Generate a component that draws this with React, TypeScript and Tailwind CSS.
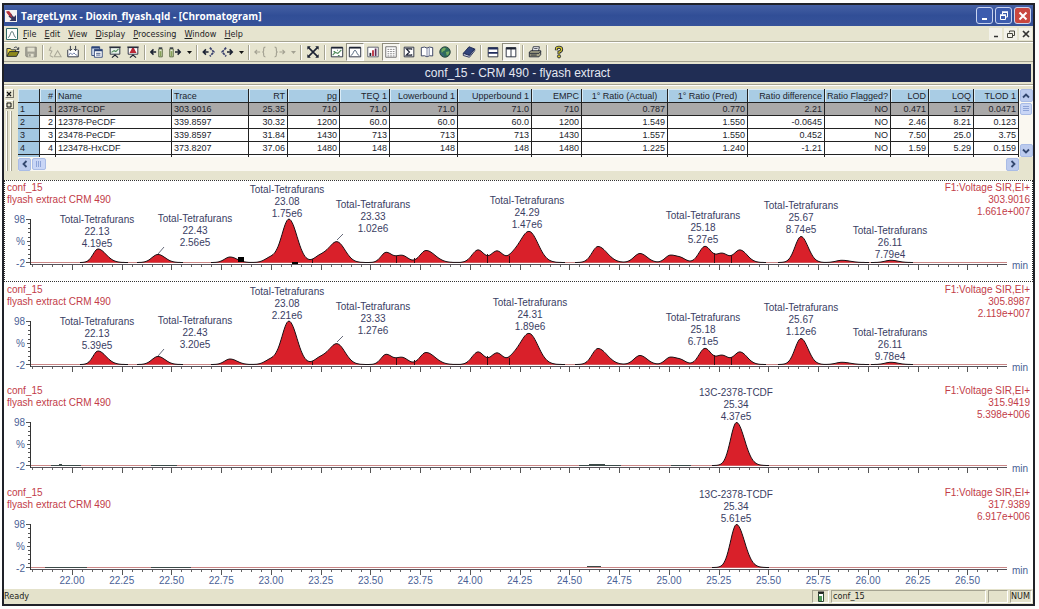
import React from "react";

type Peak = [x: number, h: number, left: number, right: number];
type Label = { x: number; top: number; lines: [string, string, string] };
type Trace = {
  mass: string;
  intensity: string;
  peaks: Peak[];
  dividers: [number, number][];
  leaders: [number, number, number, number][];
  marks: [number, number, number, number][];
  labels: Label[];
};

const PLOT_W = 976;
const BASE = 48;
const START = 21.794;
const PX_PER_MIN = 199;

const timeToX = (t: number) => (t - START) * PX_PER_MIN;

const furanPeaks: Peak[] = [
  [67, 13.5, 5, 8],
  [127, 8, 6, 7],
  [199, 5.5, 5.5, 7],
  [240, 5, 6, 8],
  [258, 43, 7, 8],
  [289, 6, 6, 7],
  [306, 20.5, 8, 8],
  [355, 10, 5, 6],
  [371, 7, 6, 6],
  [395, 12, 6, 9],
  [447, 12.5, 6, 6],
  [466, 11.5, 6, 6],
  [482, 5, 5, 6],
  [498, 31, 9, 9],
  [567, 16, 6, 9],
  [609, 9, 6, 7],
  [639, 7, 5, 6],
  [650, 4, 5, 5],
  [674, 16, 6, 6],
  [691, 9, 6, 6],
  [709, 12.5, 6, 7],
  [770, 26, 6, 7],
  [811, 2.2, 6, 8],
  [860, 2.2, 6, 7],
];

const furanDividers: [number, number][] = [
  [281, 4],
  [365, 7],
  [383, 5],
  [456, 9],
  [478, 7],
  [683, 10],
  [700, 8],
];

const leaders: [number, number, number, number][] = [
  [127, 40, 133, 33],
  [306, 26, 312, 20],
];

const furans = (areas: string[], apex: [number, string]): Label[] =>
  (
    [
      [66, 34, "22.13"],
      [164, 33, "22.43"],
      [256, 4, "23.08"],
      [342, 19, "23.33"],
      [apex[0], 15, apex[1]],
      [672, 30, "25.18"],
      [770, 20, "25.67"],
      [859, 45, "26.11"],
    ] as [number, number, string][]
  ).map(([x, top, rt], i) => ({ x, top, lines: ["Total-Tetrafurans", rt, areas[i]] }));

const traces: Trace[] = [
  {
    mass: "303.9016",
    intensity: "1.661e+007",
    peaks: furanPeaks,
    dividers: furanDividers,
    leaders,
    marks: [
      [207, 43, 6, 5],
      [261, 48, 6, 2],
    ],
    labels: furans(["4.19e5", "2.56e5", "1.75e6", "1.02e6", "1.47e6", "5.27e5", "8.74e5", "7.79e4"], [496, "24.29"]),
  },
  {
    mass: "305.8987",
    intensity: "2.119e+007",
    peaks: furanPeaks,
    dividers: furanDividers,
    leaders,
    marks: [],
    labels: furans(["5.39e5", "3.20e5", "2.21e6", "1.27e6", "1.89e6", "6.71e5", "1.12e6", "9.78e4"], [499, "24.31"]),
  },
  {
    mass: "315.9419",
    intensity: "5.398e+006",
    peaks: [[705.5, 43, 6, 8]],
    dividers: [],
    leaders: [],
    marks: [
      [20, 48, 30, 1],
      [28, 47, 3, 1],
      [120, 48, 26, 1],
      [548, 48, 42, 1],
      [558, 47, 16, 1],
      [640, 48, 20, 1],
    ],
    labels: [{ x: 705, top: 4, lines: ["13C-2378-TCDF", "25.34", "4.37e5"] }],
  },
  {
    mass: "317.9389",
    intensity: "6.917e+006",
    peaks: [[705.5, 43, 6, 8]],
    dividers: [],
    leaders: [],
    marks: [
      [14, 48, 42, 1],
      [120, 48, 40, 1],
      [556, 47, 14, 1],
    ],
    labels: [{ x: 705, top: 4, lines: ["13C-2378-TCDF", "25.34", "5.61e5"] }],
  },
];

const tickTimes = Array.from({ length: 19 }, (_, i) => 22 + i * 0.25);
const minorTicks = Array.from({ length: 99 }, (_, i) => 21.8 + i * 0.05).filter((t) => t < 26.7);

function heightAt(peaks: Peak[], x: number) {
  return peaks.reduce((sum, [px, h, l, r]) => {
    const w = x < px ? l : r;
    return sum + h * Math.exp(-((x - px) ** 2) / (2 * w * w));
  }, 0);
}

function curvePaths(peaks: Peak[]) {
  let fill = `M0 ${BASE + 0.5}`;
  let line = "";
  let open = false;
  for (let x = 0; x <= PLOT_W; x += 1) {
    const h = Math.min(heightAt(peaks, x), 43.5);
    const y = (BASE + 0.5 - h).toFixed(1);
    fill += `L${x} ${y}`;
    if (h > 0.01) {
      line += `${open ? "L" : "M"}${x} ${y}`;
      open = true;
    } else {
      open = false;
    }
  }
  return { fill: `${fill}L${PLOT_W} ${BASE + 0.5}Z`, line };
}

const pct = (x: number) => `${(x / PLOT_W) * 100}%`;

function ChromatogramPane({ trace, selected, last }: { trace: Trace; selected: boolean; last: boolean }) {
  const { fill, line } = curvePaths(trace.peaks);
  return (
    <section
      className={`relative min-h-[100px] flex-1 text-[10px] leading-[12px] ${
        selected ? "outline-1 outline-dotted -outline-offset-1 outline-[#333]" : ""
      }`}
    >
      <div className="flex h-[34px] justify-between px-[3px] pt-[2px] text-[#c23c48]">
        <p>
          conf_15
          <br />
          flyash extract CRM 490
        </p>
        <p className="text-right">
          F1:Voltage SIR,EI+
          <br />
          {trace.mass}
          <br />
          {trace.intensity}
        </p>
      </div>
      <div className="flex">
        <div className="flex h-[56px] w-[21px] flex-col justify-between text-right text-[#4a5f96]">
          <span>98</span>
          <span>%</span>
          <span>-2</span>
        </div>
        <svg className="h-[60px] w-[6px] shrink-0" viewBox="0 0 6 60" shapeRendering="crispEdges">
          <path
            d="M1 5.5H6M2 27.5H6M1 48.5H6M3 9.5H6M3 14.5H6M3 18.5H6M3 23.5H6M3 31.5H6M3 35.5H6M3 40.5H6M3 44.5H6"
            stroke="#555"
          />
          <path d="M5.5 5V51" stroke="#333" />
        </svg>
        <svg
          className="h-[60px] min-w-0 flex-1 overflow-visible"
          viewBox={`0 0 ${PLOT_W} 60`}
          preserveAspectRatio="none"
        >
          <path d="M0 48.5H976" stroke="#c98686" />
          <path d={fill} fill="#d9202a" />
          <path d={line} fill="none" stroke="#1a1014" />
          {trace.dividers.map(([x, h]) => (
            <path key={x} d={`M${x + 0.5} 49V${49 - h}`} stroke="#3a0a10" />
          ))}
          {trace.marks.map(([x, y, w, h]) => (
            <rect key={`${x}-${y}`} x={x} y={y} width={w} height={h} fill={trace.labels.length > 1 ? "#000" : "#3c4a48"} />
          ))}
          {trace.leaders.map(([x1, y1, x2, y2]) => (
            <path key={x1} d={`M${x1} ${y1}L${x2} ${y2}`} stroke="#666a7a" />
          ))}
          <path d="M0 50.5H976" stroke="#57525a" />
          {minorTicks.map((t) => (
            <path key={t} d={`M${Math.round(timeToX(t)) + 0.5} 51V53`} stroke="#666" />
          ))}
          {tickTimes.map((t) => (
            <path key={t} d={`M${Math.round(timeToX(t)) + 0.5} 51V56`} stroke="#555" />
          ))}
        </svg>
        <span className="w-[26px] pt-[46px] pl-[5px] text-[#4a5f96]">min</span>
      </div>
      <div className="pointer-events-none absolute inset-y-0 right-[26px] left-[27px] text-[#3a3d63]">
        {trace.labels.map((l) => (
          <p
            key={l.lines[1]}
            className="absolute -translate-x-1/2 text-center whitespace-nowrap"
            style={{ left: pct(l.x), top: l.top }}
          >
            {l.lines[0]}
            <br />
            {l.lines[1]}
            <br />
            {l.lines[2]}
          </p>
        ))}
        {last &&
          tickTimes.map((t) => (
            <span
              key={t}
              className="absolute top-[90px] -translate-x-1/2 text-[#4a5f96]"
              style={{ left: pct(timeToX(t)) }}
            >
              {t.toFixed(2)}
            </span>
          ))}
      </div>
    </section>
  );
}

const columns: { name: string; width: number; align: string }[] = [
  { name: "", width: 22, align: "text-left" },
  { name: "#", width: 16, align: "text-right" },
  { name: "Name", width: 116, align: "text-left" },
  { name: "Trace", width: 77, align: "text-left" },
  { name: "RT", width: 39, align: "text-right" },
  { name: "pg", width: 52, align: "text-right" },
  { name: "TEQ 1", width: 50, align: "text-right" },
  { name: "Lowerbound 1", width: 68, align: "text-right" },
  { name: "Upperbound 1", width: 74, align: "text-right" },
  { name: "EMPC", width: 50, align: "text-right" },
  { name: "1° Ratio (Actual)", width: 86, align: "text-center" },
  { name: "1° Ratio (Pred)", width: 80, align: "text-center" },
  { name: "Ratio difference", width: 77, align: "text-right" },
  { name: "Ratio Flagged?", width: 66, align: "text-right" },
  { name: "LOD", width: 38, align: "text-right" },
  { name: "LOQ", width: 45, align: "text-right" },
  { name: "TLOD 1", width: 45, align: "text-right" },
];

const rows = [
  ["1", "1", "2378-TCDF", "303.9016", "25.35", "710", "71.0", "71.0", "71.0", "710", "0.787", "0.770", "2.21", "NO", "0.471", "1.57", "0.0471"],
  ["2", "2", "12378-PeCDF", "339.8597", "30.32", "1200", "60.0", "60.0", "60.0", "1200", "1.549", "1.550", "-0.0645", "NO", "2.46", "8.21", "0.123"],
  ["3", "3", "23478-PeCDF", "339.8597", "31.84", "1430", "713", "713", "713", "1430", "1.557", "1.550", "0.452", "NO", "7.50", "25.0", "3.75"],
  ["4", "4", "123478-HxCDF", "373.8207", "37.06", "1480", "148", "148", "148", "1480", "1.225", "1.240", "-1.21", "NO", "1.59", "5.29", "0.159"],
];

function ResultsTable() {
  return (
    <table className="w-full table-fixed border-separate border-spacing-0 text-[9px] leading-[12px] text-[#22242c]">
      <colgroup>
        {columns.map((c, i) => (
          <col key={i} style={{ width: c.width }} />
        ))}
      </colgroup>
      <thead>
        <tr>
          {columns.map((c, i) => (
            <th
              key={i}
              scope="col"
              className={`h-[14px] overflow-hidden border-r border-b border-[#222] bg-[#a9cce4] px-[2px] py-0 font-normal whitespace-nowrap shadow-[inset_1px_1px_0_#d9ebf6] ${c.align}`}
            >
              {c.name}
            </th>
          ))}
        </tr>
      </thead>
      <tbody>
        {rows.map((r, ri) => (
          <tr key={ri} className={ri === 0 ? "bg-[#aaa9a9]" : "bg-white"}>
            {r.map((v, ci) => (
              <td
                key={ci}
                className={`h-[13px] border-r border-b border-[#222] px-[2px] py-0 whitespace-nowrap ${
                  ci === 0 ? "bg-[#a3c8e2] text-left" : ci === 2 || ci === 3 ? "text-left" : "text-right"
                }`}
              >
                {v}
              </td>
            ))}
          </tr>
        ))}
        <tr className="bg-white">
          {columns.map((_, ci) => (
            <td key={ci} className={`h-[2px] border-r border-[#222] p-0 ${ci === 0 ? "bg-[#a3c8e2]" : ""}`} />
          ))}
        </tr>
      </tbody>
    </table>
  );
}

function ScrollButton({ label, d }: { label: string; d: string }) {
  return (
    <button
      aria-label={label}
      className="flex h-[13px] w-[13px] shrink-0 items-center justify-center rounded-[2px] border border-[#a9bce6] bg-[#bccbee]"
    >
      <svg viewBox="0 0 8 8" className="h-[8px] w-[8px]" fill="none" stroke="#33476f" strokeWidth="1.8">
        <path d={d} />
      </svg>
    </button>
  );
}

const ink = "#1c2233";
const green = "#4f8a58";

const icons: Record<string, React.ReactNode> = {
  Open: (
    <>
      <path d="M1 13V4h4l1 1.5h5V8" fill="#e8d44a" stroke={ink} />
      <path d="M1 13l3-5.500h11L12 13z" fill="#8f8a1c" stroke={ink} />
      <path d="M9 3.500c2-2 4-1 4.500 1M14.500 2.500v2.500h-2.500" fill="none" stroke={ink} />
    </>
  ),
  Save: (
    <>
      <path d="M2 2.500h12v11H3l-1-1z" fill="#a4a396" stroke="#85847a" />
      <path d="M4 3h8v4.500H4z" fill="#e4e2d0" />
      <path d="M5 10h6v3.500H5z" fill="#e4e2d0" />
      <path d="M6 10.500h1.500V13H6z" fill="#85847a" />
    </>
  ),
  Smooth: (
    <path d="M3.500 2L1.500 6l3 1-2 4M7 13.500h8l-4-7-4 7M2 12l4 2" fill="none" stroke="#a9a798" strokeWidth="1.2" />
  ),
  Integrate: (
    <>
      <path d="M2 5.500v8h12v-8" fill="#fff" stroke={ink} />
      <path d="M5 1v5M3 4.500L5 6.500l2-2M11 1v5M9 4.500l2 2 2-2" fill="none" stroke={ink} />
      <path d="M3 12l2-3 2 2 2-2 2 2 2 1" fill="none" stroke="#5b6d9b" />
    </>
  ),
  Windows: (
    <>
      <path d="M2 2h9v10H2z" fill="#dce6f5" stroke="#2b4478" />
      <path d="M5 5h9v9H5z" fill="#fff" stroke="#2b4478" />
      <path d="M2 3h9M5 6h9" stroke="#2b4478" strokeWidth="2" />
      <path d="M7 9.500h5M7 11.500h5" stroke="#2b4478" />
    </>
  ),
  Chart: (
    <>
      <path d="M2.500 3h11v7.500h-11z" fill="#e9f2ec" stroke={ink} />
      <path d="M1.500 2.500h13M8 10.500v2M4.500 14.500L8 11.500l3.500 3" fill="none" stroke={ink} strokeWidth="1.3" />
      <path d="M4 8.500l3-2 2 1 3-3" fill="none" stroke={green} strokeWidth="1.2" />
    </>
  ),
  Peaks: (
    <>
      <path d="M2.500 3h11v7.500h-11z" fill="#fff" stroke={ink} />
      <path d="M1.500 2.500h13M8 10.500v2M4.500 14.500L8 11.500l3.500 3" fill="none" stroke={ink} strokeWidth="1.3" />
      <path d="M4 9l3-5.500h2L12 9z" fill="#b92836" />
    </>
  ),
  "Previous sample": (
    <>
      <path d="M1 8h6M4 5L1 8l3 3" fill="none" stroke={ink} strokeWidth="1.7" />
      <path d="M10 4.500h4v9h-4z" fill="#e6ecd0" stroke="#4a5a35" />
      <path d="M11 7h2v6h-2z" fill="#86a058" />
      <path d="M10 3.500h4" stroke={ink} strokeWidth="1.5" />
    </>
  ),
  "Next sample": (
    <>
      <path d="M2 4.500h4v9H2z" fill="#e6ecd0" stroke="#4a5a35" />
      <path d="M3 7h2v6H3z" fill="#86a058" />
      <path d="M2 3.500h4" stroke={ink} strokeWidth="1.5" />
      <path d="M8 8h6M11 5l3 3-3 3" fill="none" stroke={ink} strokeWidth="1.7" />
    </>
  ),
  "Previous compound": (
    <>
      <path d="M1.500 8h6M4.500 5l-3 3 3 3" fill="none" stroke={ink} strokeWidth="1.8" />
      <path d="M9 3l4.500 5L9 13" fill="none" stroke="#39406e" strokeWidth="2" strokeDasharray="3 1" />
    </>
  ),
  "Next compound": (
    <>
      <path d="M7 3L2.500 8 7 13" fill="none" stroke="#39406e" strokeWidth="2" strokeDasharray="3 1" />
      <path d="M8 8h6M11 5l3 3-3 3" fill="none" stroke={ink} strokeWidth="1.8" />
    </>
  ),
  "Previous group": (
    <path
      d="M1 8h6M3.500 5.500L1 8l2.500 2.500M13 2.500q-2 0-2 2v2q0 1.500-1.500 1.500 1.500 0 1.500 1.500v2q0 2 2 2"
      fill="none"
      stroke="#a3a192"
      strokeWidth="1.3"
    />
  ),
  "Next group": (
    <path
      d="M3 2.500q2 0 2 2v2Q5 8 6.500 8 5 8 5 9.500v2q0 2-2 2M8.500 8h6M12 5.500L14.500 8 12 10.500"
      fill="none"
      stroke="#a3a192"
      strokeWidth="1.3"
    />
  ),
  "Reset zoom": (
    <>
      <path d="M3 3l10 10M13 3L3 13" stroke={ink} strokeWidth="1.8" />
      <path d="M1.500 1.500h4l-4 4zM14.500 1.500v4l-4-4zM1.500 14.500v-4l4 4zM14.500 14.500h-4l4-4z" fill={ink} />
    </>
  ),
  Calibration: (
    <>
      <path d="M1.500 3h13v10.500h-13z" fill="#fff" stroke={ink} />
      <path d="M1.500 3h13" stroke={ink} strokeWidth="2" />
      <path d="M3 11.500l3-3 3 1 4-4M4 7.500h2M9 12h2M8 6h1" fill="none" stroke={green} strokeWidth="1.3" />
    </>
  ),
  Chromatogram: (
    <>
      <path d="M1.500 3h13v10.500h-13z" fill="#fff" stroke={ink} />
      <path d="M1.500 3h13" stroke={ink} strokeWidth="2" />
      <path d="M3 12c3 0 3-6 5-6s2 6 5 6" fill="none" stroke="#4c6177" />
    </>
  ),
  Bars: (
    <>
      <path d="M2 2.500h12v11H2z" fill="#fff" stroke="#515766" />
      <path d="M4 9h2v3.500H4z" fill={ink} />
      <path d="M7 6h2v6.500H7z" fill="#b92836" />
      <path d="M10 4h2v8.500h-2z" fill="#5b2a56" />
    </>
  ),
  Grid: (
    <>
      <path d="M2 2h12v12H2z" fill="#fff" stroke="#666" />
      <path
        d="M4 5h2M7 5h2M10 5h2M4 7.500h2M7 7.500h2M10 7.500h2M4 10h2M7 10h2M10 10h2M4 12.500h2M7 12.500h2M10 12.500h2"
        stroke="#777"
      />
    </>
  ),
  Summary: (
    <>
      <path d="M2.500 2.500h11v11h-11z" fill="#fff" stroke={ink} />
      <path d="M11 5.500v-1H5L8.500 8 5 11.500h6v-1" fill="none" stroke={ink} strokeWidth="1.4" />
    </>
  ),
  Report: (
    <>
      <path d="M1.500 3q4-1.500 6.500.5Q10.500 1.500 14.500 3v9.500q-4-1-6.500 1-2.500-2-6.500-1z" fill="#fff" stroke="#2c3558" />
      <path d="M8 3.500v10M10.500 3v9" stroke="#6c7696" />
    </>
  ),
  Web: (
    <>
      <circle cx="8" cy="8" r="6" fill="#2e6c5c" stroke="#274039" />
      <path d="M4 5q3-3 5-1-1 3-3 3l-2 2zM9 8l4-1q0 4-3 5z" fill="#75ab61" />
      <path d="M2.500 9q3 0 4 4" stroke="#42598d" fill="none" />
    </>
  ),
  Library: (
    <>
      <path d="M1.500 9.500L8 2l6.500 2.500L8.500 12z" fill="#32457c" stroke="#18244e" />
      <path d="M1.500 9.500v2.500L8.500 14l6-7.500v-2L8.500 12z" fill="#d8dcec" stroke="#18244e" />
    </>
  ),
  "Tile rows": (
    <>
      <path d="M2.500 3h11v10.500h-11z" fill="#fff" stroke={ink} />
      <path d="M2.500 4h11M2.500 9h11" stroke="#202c5c" strokeWidth="2.2" />
    </>
  ),
  "Tile columns": (
    <>
      <path d="M2.500 3h11v10.500h-11zM8 3v10.500" fill="#fff" stroke={ink} />
      <path d="M2.500 4h11" stroke={ink} strokeWidth="2.2" />
    </>
  ),
  Print: (
    <>
      <path d="M5 7l1-5h7l-1 5" fill="#fff" stroke={ink} />
      <path d="M1.500 8l2-1.500h11V11l-2 2.500h-11z" fill="#a6a487" stroke={ink} />
      <path d="M2 9.500h10.500l2-2M3 11.500h7M7 4.200h4" fill="none" stroke={ink} />
    </>
  ),
  Help: (
    <>
      <path d="M5 6V4.500Q5 2.500 8 2.500t3 2.500Q11 7 8 8v2.500" fill="none" stroke={ink} strokeWidth="3.4" />
      <path d="M5 5.500V4.500Q5 2.500 8 2.500t3 2.500Q11 7 8 8v2" fill="none" stroke="#d7c92e" strokeWidth="1.5" />
      <circle cx="8" cy="13" r="1.8" fill="#d7c92e" stroke={ink} />
    </>
  ),
};

const toolGroups: string[][] = [
  ["Open", "Save"],
  ["Smooth", "Integrate"],
  ["Windows", "Chart", "Peaks"],
  ["Previous sample", "Next sample", "menu:Samples"],
  ["Previous compound", "Next compound", "menu:Compounds"],
  ["Previous group", "Next group", "menu-off:Groups"],
  ["Reset zoom"],
  ["Calibration", "Chromatogram", "Bars", "Grid", "Summary", "Report", "Web"],
  ["Library"],
  ["Tile rows", "Tile columns"],
  ["Print"],
  ["Help"],
];

const pressed = ["Chromatogram", "Grid", "Tile columns"];

function Toolbar() {
  return (
    <div role="toolbar" className="flex h-[20px] items-center border-t border-b border-t-white border-b-[#a5a391]">
      {toolGroups.map((group, gi) => (
        <React.Fragment key={gi}>
          {gi > 0 && (
            <span className="flex w-[6px] justify-center">
              <span className="h-[15px] w-[2px] border-r border-l border-r-white border-l-[#a5a391]" />
            </span>
          )}
          {group.map((name) =>
            name.startsWith("menu") ? (
              <button key={name} aria-label={name.split(":")[1]} className="flex w-[10px] justify-center">
                <svg viewBox="0 0 5 3" className="h-[3px] w-[5px]" fill={name.startsWith("menu-off") ? "#a3a192" : "#111"}>
                  <path d="M0 0h5L2.500 3z" />
                </svg>
              </button>
            ) : (
              <button
                key={name}
                aria-label={name}
                className={`flex h-[18px] w-[18px] items-center justify-center ${
                  pressed.includes(name) ? "border border-t-[#8f8d7e] border-r-white border-b-white border-l-[#8f8d7e] bg-[#f6f5ee]" : ""
                }`}
              >
                <svg viewBox="0 0 16 16" className="h-[14px] w-[14px] shrink-0">
                  {icons[name]}
                </svg>
              </button>
            )
          )}
        </React.Fragment>
      ))}
    </div>
  );
}

function TitleBar() {
  const box = "flex h-[17px] w-[17px] items-center justify-center rounded-[3px] border border-[#c9d4f0]";
  return (
    <header className="flex h-[21px] items-center bg-linear-to-b from-[#4560a4] via-[#314e96] to-[#36529a] pr-[2px] pl-[1px]">
      <svg viewBox="0 0 12 12" className="h-[12px] w-[12px] shrink-0">
        <path d="M0 0h12v12H0z" fill="#f3f1f0" />
        <path d="M1 1.500l3-.5 3 3.500-2.500 2z" fill="#b5333c" />
        <path d="M11 5v6H4.500l2-2-3-2.500L6 4l3 3z" fill="#33335a" />
        <path d="M2 2l5 5" stroke="#b5333c" strokeWidth="1.5" />
      </svg>
      <h1 className="flex-1 pl-[4px] font-['Open_Sans',sans-serif] text-[10px] leading-[16px] font-bold whitespace-nowrap text-white">
        TargetLynx - Dioxin_flyash.qld - [Chromatogram]
      </h1>
      <div className="flex gap-[2px]">
        <button aria-label="Minimize" className={`${box} bg-[#3c5cae]`}>
          <svg viewBox="0 0 12 12" className="h-[12px] w-[12px]">
            <path d="M3 9h5" stroke="#fff" strokeWidth="2" />
          </svg>
        </button>
        <button aria-label="Restore" className={`${box} bg-[#3c5cae]`}>
          <svg viewBox="0 0 12 12" className="h-[12px] w-[12px]" fill="none" stroke="#fff">
            <path d="M2.500 5.500h5v4h-5zM4.500 4.500v-2h5v4.500h-2" />
            <path d="M2 5h6M4 2h6" strokeWidth="1.5" />
          </svg>
        </button>
        <button aria-label="Close" className={`${box} bg-[#c9473f]`}>
          <svg viewBox="0 0 12 12" className="h-[12px] w-[12px]">
            <path d="M2.500 2.500l7 7M9.500 2.500l-7 7" stroke="#fff" strokeWidth="2" />
          </svg>
        </button>
      </div>
    </header>
  );
}

function MenuBar() {
  const items = ["File", "Edit", "View", "Display", "Processing", "Window", "Help"];
  const box = "flex h-[12px] w-[13px] items-center justify-center bg-[#f3f2ea]";
  return (
    <nav className="flex h-[16px] items-center border-b border-[#a5a391] pr-[1px] pl-[2px] font-['DejaVu_Sans_Condensed','DejaVu_Sans',sans-serif] text-[9px] leading-[12px] text-[#23231f]">
      <svg viewBox="0 0 12 12" className="mr-[5px] h-[12px] w-[12px]">
        <path d="M.5.5h11v11H.5z" fill="#fff" stroke="#2f6b68" />
        <path d="M2 9.500c2 0 2.500-6 4-6s2 6 4 6" fill="none" stroke="#4b6a68" />
      </svg>
      <ul className="flex flex-1 gap-[8px]">
        {items.map((m) => (
          <li key={m}>
            <button>
              <span className="underline underline-offset-1">{m[0]}</span>
              {m.slice(1)}
            </button>
          </li>
        ))}
      </ul>
      <div className="flex gap-[2px]">
        <button aria-label="Minimize document" className={box}>
          <svg viewBox="0 0 8 8" className="h-[8px] w-[8px]">
            <path d="M2 6.500h4" stroke="#333" strokeWidth="1.5" />
          </svg>
        </button>
        <button aria-label="Restore document" className={box}>
          <svg viewBox="0 0 8 8" className="h-[8px] w-[8px]" fill="none" stroke="#44443c">
            <path d="M.5 3.500h5v4h-5zM2.500 2.500v-1.500h5v4.500h-2" />
          </svg>
        </button>
        <button aria-label="Close document" className={box}>
          <svg viewBox="0 0 8 8" className="h-[8px] w-[8px]">
            <path d="M1 1l6 6M7 1L1 7" stroke="#333" strokeWidth="1.7" />
          </svg>
        </button>
      </div>
    </nav>
  );
}

function ResultsPanel() {
  const small =
    "flex h-[9px] w-[9px] items-center justify-center border border-t-white border-r-[#77756a] border-b-[#77756a] border-l-white";
  return (
    <div className="flex border-t border-white pt-[3px] pb-[9px]">
      <div className="flex w-[14px] shrink-0 flex-col items-center gap-[2px] pr-[4px]">
        <button aria-label="Close results" className={small}>
          <svg viewBox="0 0 6 6" className="h-[6px] w-[6px]">
            <path d="M1 1l4 4M5 1L1 5" stroke="#111" strokeWidth="1.2" />
          </svg>
        </button>
        <button aria-label="Maximize results" className={small}>
          <svg viewBox="0 0 6 6" className="h-[6px] w-[6px]" fill="none">
            <path d="M1 1h4v4H1z" stroke="#111" />
          </svg>
        </button>
        <div className="flex flex-1 gap-[2px]">
          <span className="w-[2px] border-r border-l border-r-[#a5a391] border-l-white" />
          <span className="w-[2px] border-r border-l border-r-[#a5a391] border-l-white" />
        </div>
      </div>
      <div className="min-w-0 flex-1">
        <div className="flex bg-[#faf8f1]">
          <div className="min-w-0 flex-1">
            <ResultsTable />
          </div>
          <div className="flex w-[14px] shrink-0 flex-col items-center">
            <ScrollButton label="Scroll up" d="M1 5.500L4 2.500l3 3" />
            <span className="my-[1px] flex h-[12px] w-[12px] items-center justify-center rounded-[2px] border border-[#a9bce6] bg-[#c9d6f6]">
              <svg viewBox="0 0 6 6" className="h-[6px] w-[6px]" stroke="#8ea4d8">
                <path d="M0 .5h6M0 2.500h6M0 4.500h6" />
              </svg>
            </span>
            <span className="flex-1" />
            <ScrollButton label="Scroll down" d="M1 2.500l3 3 3-3" />
          </div>
        </div>
        <div className="flex">
          <div className="flex h-[14px] flex-1 items-center bg-[#faf8f1]">
            <ScrollButton label="Scroll left" d="M5.500 1l-3 3 3 3" />
            <span className="ml-[1px] flex h-[12px] w-[14px] items-center justify-center rounded-[2px] border border-[#a9bce6] bg-[#c9d6f6]">
              <svg viewBox="0 0 6 6" className="h-[6px] w-[6px]" stroke="#8ea4d8">
                <path d="M.5 0v6M2.500 0v6M4.500 0v6" />
              </svg>
            </span>
            <span className="flex-1" />
            <ScrollButton label="Scroll right" d="M2.500 1l3 3-3 3" />
          </div>
          <span className="w-[14px]" />
        </div>
      </div>
    </div>
  );
}

function StatusBar() {
  const cell = "flex h-[13px] items-center border border-t-[#a5a391] border-r-white border-b-white border-l-[#a5a391]";
  return (
    <footer className="flex h-[15px] items-center gap-[2px] bg-[#e4e2cb] pr-[1px] font-['DejaVu_Sans_Condensed','DejaVu_Sans',sans-serif] text-[9px] leading-[11px] text-[#1d1d1a]">
      <span className="flex-1">Ready</span>
      <span className={`${cell} w-[17px] justify-center`}>
        <svg viewBox="0 0 8 11" className="h-[11px] w-[8px]">
          <path d="M1.500 2.500h5v8h-5z" fill="#fff" stroke="#2e4a35" />
          <path d="M2 5h3v5H2z" fill="#4f9a58" />
          <path d="M1 1.500h6" stroke="#222" strokeWidth="2" />
        </svg>
      </span>
      <span className={`${cell} w-[155px] pl-[1px]`}>conf_15</span>
      <span className={`${cell} w-[20px]`} />
      <span className={`${cell} w-[22px]`}>NUM</span>
    </footer>
  );
}

export default function App() {
  return (
    <div className="flex min-h-screen flex-col bg-[#fdfdfd] pt-[3px] pr-[4px] pb-[3px] pl-[2px] font-['Liberation_Sans',Arial,sans-serif]">
      <main className="flex flex-1 flex-col border-2 border-[#1f2128] bg-[#e6e4cf]">
        <TitleBar />
        <MenuBar />
        <Toolbar />
        <div className="border-b border-[#a5a391] py-[2px] pr-[2px]">
          <h2 className="h-[18px] bg-[#202d54] text-center text-[12px] leading-[18px] text-[#e4e8f2]">
            conf_15 - CRM 490 - flyash extract
          </h2>
        </div>
        <ResultsPanel />
        <div className="flex flex-1 flex-col bg-white pb-[3px]">
          {traces.map((t, i) => (
            <ChromatogramPane key={t.mass} trace={t} selected={i === 0} last={i === traces.length - 1} />
          ))}
        </div>
        <StatusBar />
      </main>
    </div>
  );
}
